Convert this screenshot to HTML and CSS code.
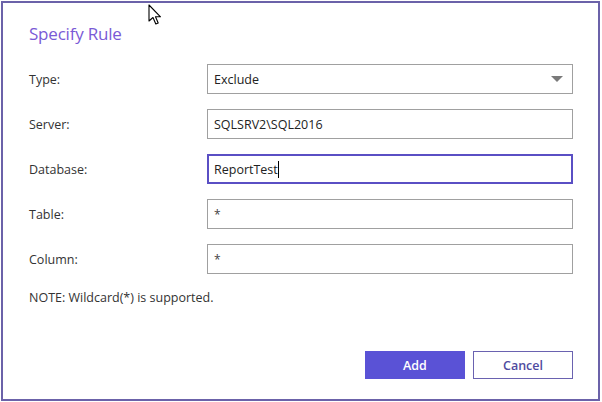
FILE: index.html
```html
<!DOCTYPE html>
<html>
<head>
<meta charset="utf-8">
<link rel="stylesheet" href="styles.css">
</head>
<body>
<div class="dialog">
  <h1 class="title">Specify Rule</h1>
  <div class="form">
    <div class="row">
      <label class="label">Type:</label>
      <div class="field select"><span>Exclude</span><span class="arrow"></span></div>
    </div>
    <div class="row">
      <label class="label">Server:</label>
      <div class="field">SQLSRV2\SQL2016</div>
    </div>
    <div class="row">
      <label class="label">Database:</label>
      <div class="field focused">ReportTest<span class="caret"></span></div>
    </div>
    <div class="row">
      <label class="label">Table:</label>
      <div class="field star">*</div>
    </div>
    <div class="row">
      <label class="label">Column:</label>
      <div class="field star">*</div>
    </div>
  </div>
  <p class="note">NOTE: Wildcard(*) is supported.</p>
  <div class="buttons">
    <button class="btn primary">Add</button>
    <button class="btn secondary">Cancel</button>
  </div>
</div>
<svg class="cursor" width="14" height="22" viewBox="0 0 14 22">
  <path d="M1 1 L1 17 L5 13.5 L7.8 20 L10.2 19 L7.5 12.8 L12.5 12.8 Z" fill="#fff" stroke="#000" stroke-width="1.1" stroke-linejoin="round"/>
</svg>
</body>
</html>
```

FILE: styles.css
```css
* { box-sizing: border-box; }
html, body { margin: 0; padding: 0; background: #fff; }
body {
  width: 602px;
  height: 402px;
  position: relative;
  overflow: hidden;
  font-family: "Open Sans", "Noto Sans", sans-serif;
  color: #333;
}
.dialog {
  margin: 1px 0 0 1px;
  width: 599px;
  height: 400px;
  border: 2px solid #6b62a9;
  padding: 18px 23px 0 26px;
  display: flex;
  flex-direction: column;
}
.title {
  margin: 0;
  font-size: 17px;
  font-weight: 400;
  color: #7a5ad6;
  line-height: 26px;
  letter-spacing: -0.2px;
}
.form {
  margin-top: 17px;
  display: flex;
  flex-direction: column;
  gap: 15px;
}
.row {
  display: flex;
  align-items: center;
  height: 30px;
}
.label {
  width: 178px;
  flex: 0 0 178px;
  font-size: 12.5px;
  color: #333;
}
.field {
  width: 366px;
  flex: 0 0 366px;
  height: 30px;
  border: 1px solid #a0a0a0;
  font-size: 12.5px;
  color: #222;
  padding: 0 0 0 6px;
  display: flex;
  align-items: center;
}
.field.focused {
  border: 2px solid #5a4fc4;
  padding-left: 5px;
}
.caret {
  display: inline-block;
  width: 1px;
  height: 17px;
  background: #000;
  margin-left: 0;
}
.field.star { align-items: flex-start; padding-top: 6px; font-size: 12px; color: #444; }
.select { justify-content: space-between; padding-right: 9px; }
.arrow {
  width: 0;
  height: 0;
  border-left: 6px solid transparent;
  border-right: 6px solid transparent;
  border-top: 6px solid #7a7a7a;
}
.note {
  margin: 15px 0 0 0;
  font-size: 12.5px;
  color: #333;
  line-height: 18px;
}
.buttons {
  margin-top: 44px;
  width: 544px;
  display: flex;
  justify-content: flex-end;
  gap: 8px;
}
.btn {
  width: 100px;
  height: 28px;
  font-family: "Open Sans", "Noto Sans", sans-serif;
  font-size: 12.5px;
  font-weight: 600;
  cursor: default;
}
.primary {
  background: #5a52d6;
  border: 1px solid #5a52d6;
  color: #fff;
}
.secondary {
  background: #fff;
  border: 1px solid #6a62b0;
  color: #4f4aa0;
}
.cursor {
  position: absolute;
  left: 148px;
  top: 4px;
}
```
